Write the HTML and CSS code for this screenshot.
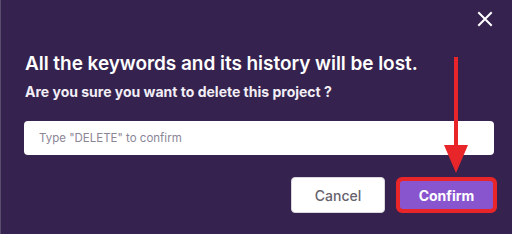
FILE: index.html
```html
<!DOCTYPE html>
<html>
<head>
<meta charset="utf-8">
<link rel="stylesheet" href="styles.css">
</head>
<body>
<div class="dialog">
  <div class="top">
    <button class="close" aria-label="Close">
      <svg width="16" height="16" viewBox="0 0 16 16"><path d="M2 2L14 14M14 2L2 14" stroke="#fff" stroke-width="2" stroke-linecap="square"/></svg>
    </button>
  </div>
  <h1 class="title">All the keywords and its history will be lost.</h1>
  <p class="subtitle">Are you sure you want to delete this project ?</p>
  <div class="field">Type "DELETE" to confirm</div>
  <div class="actions">
    <button class="btn cancel">Cancel</button>
    <div class="highlight"><button class="btn confirm">Confirm</button></div>
  </div>
  <svg class="arrow" width="30" height="120" viewBox="0 0 30 120"><rect x="11" y="0" width="4" height="95" fill="#e8262a"/><path d="M1 88L25 88L13 116Z" fill="#e8262a"/></svg>
</div>
</body>
</html>
```
FILE: styles.css
```css
html, body { margin: 0; padding: 0; }
body { width: 512px; height: 234px; overflow: hidden; background: #35224e; font-family: Inter, "Noto Sans", sans-serif; }
.dialog { position: relative; width: 512px; height: 234px; box-sizing: border-box; border-left: 1px solid #5a4d6b; background: #35224e; padding: 0 18px 0 23px; display: flex; flex-direction: column; }
.top { display: flex; justify-content: flex-end; height: 40px; padding-top: 11px; box-sizing: border-box; }
.close { background: none; border: 0; padding: 0; width: 16px; height: 16px; margin-right: 1px; display: block; }
.close svg { display: block; }
.title { margin: 12px 0 0 1px; color: #fff; font-size: 19px; font-weight: 600; line-height: 24px; letter-spacing: -0.05px; }
.subtitle { margin: 7px 0 0 1px; color: #f2eef6; font-size: 14px; font-weight: 700; line-height: 17px; }
.field { margin-top: 21px; height: 34px; box-sizing: border-box; background: #fff; border-radius: 4px; padding: 0 15px; display: flex; align-items: center; color: #8b8596; font-size: 11.5px; }
.actions { display: flex; justify-content: flex-end; gap: 11px; margin-top: 22px; margin-right: -3px; }
.btn { border: 0; font-family: inherit; font-size: 14px; border-radius: 4px; display: flex; align-items: center; justify-content: center; }
.cancel { width: 94px; height: 36px; background: #fff; color: #66626e; border: 1px solid #d9d6de; box-sizing: border-box; font-weight: 500; }
.highlight { border: 3px solid #e8262a; border-radius: 6px; padding: 1px; background: #e8262a; }
.confirm { width: 93px; height: 28px; background: #8955cf; color: #fff; font-weight: 700; border-radius: 3px; }
.arrow { position: absolute; left: 442px; top: 57px; }
```
